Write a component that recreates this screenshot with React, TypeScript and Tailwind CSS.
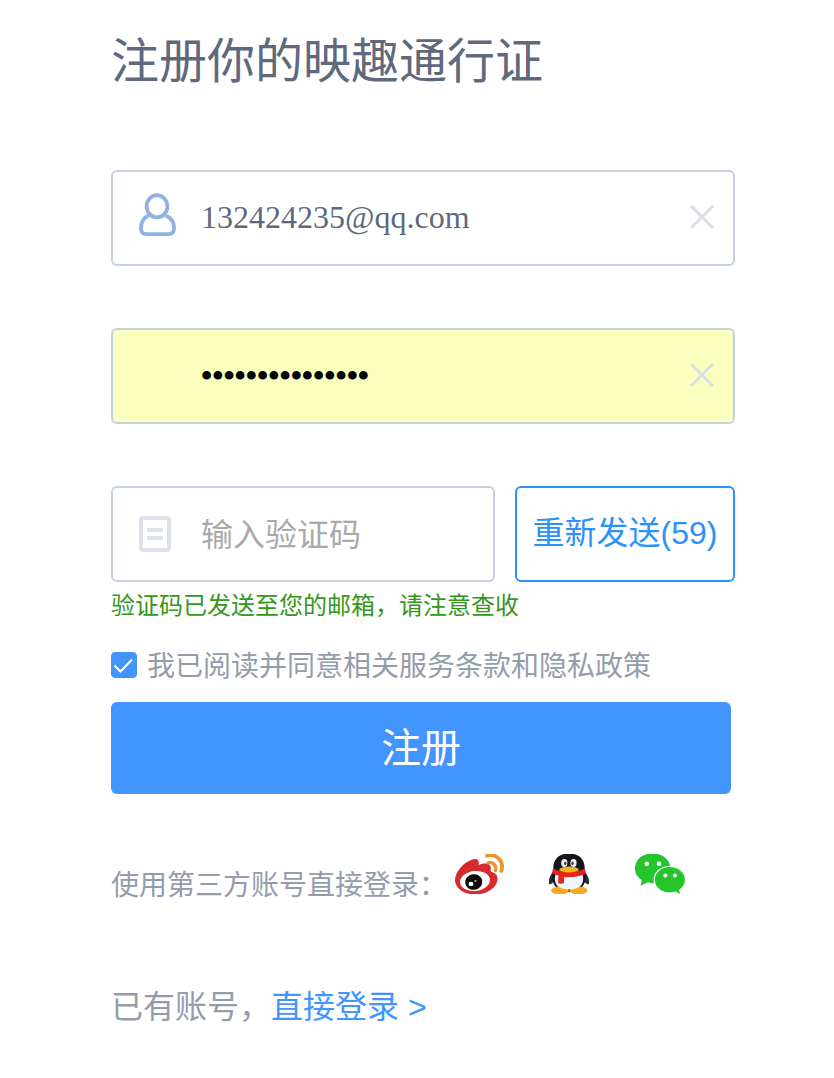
import { useState } from "react";

const fieldBox =
  "flex h-24 items-center rounded-md border-2 border-[#c5cfde]";
const fieldInput =
  "h-full min-w-0 flex-1 bg-transparent pb-0.5 font-['Liberation_Serif','Noto_Sans_CJK_SC',serif] text-[32px] outline-none";

function UserIcon() {
  return (
    <svg viewBox="0 0 40 44" className="h-11 w-10" fill="none" stroke="#8fb1e4" strokeWidth="3.8" aria-hidden="true">
      <ellipse cx="20" cy="13.300" rx="10.400" ry="11.100" />
      <path d="M11.500 22.500C6.500 24.800 4 29.500 3.900 34.800c-.1 4.200 1.800 6.300 5.600 6.300h22c3.800 0 5.700-2.100 5.600-6.300-.1-5.300-2.600-10-8.600-12.300" strokeLinejoin="round" />
    </svg>
  );
}

function NoteIcon() {
  return (
    <svg viewBox="0 0 40 44" className="h-11 w-10" fill="none" stroke="#dce1ec" strokeWidth="4" aria-hidden="true">
      <rect x="4" y="6" width="28" height="32" rx="2" />
      <path d="M10 18h16M10 26h16" />
    </svg>
  );
}

function ClearButton({ label, onClick }: { label: string; onClick: () => void }) {
  return (
    <button type="button" aria-label={label} onClick={onClick} className="mr-[19px] shrink-0 pb-0.5">
      <svg viewBox="0 0 24 24" className="size-6" fill="none" stroke="#d9dfe4" strokeWidth="3" aria-hidden="true">
        <path d="M1 1l22 22M23 1L1 23" />
      </svg>
    </button>
  );
}

function WeiboIcon() {
  return (
    <svg viewBox="0 1 50 40" className="h-10 w-[50px]" aria-hidden="true">
      <path d="M0 27C0 19 8 10 16 7c5-2 9-1 7.500 5 5-2.500 13-2.500 12.300 4-.1 1.500-.6 2.300 1 3 4 1.200 5.700 3.500 5.700 7C42.500 34.500 32 41.500 20.500 41.500 9 41.500 0 35.500 0 27z" fill="#d52a2e" />
      <ellipse cx="20" cy="28" rx="15" ry="10" fill="#fff" transform="rotate(-7 20 28)" />
      <ellipse cx="18.700" cy="29" rx="8.600" ry="7.800" fill="#0a0a0a" transform="rotate(-10 18.700 29)" />
      <ellipse cx="16" cy="31" rx="2.500" ry="2.200" fill="#fff" />
      <circle cx="20.500" cy="28" r="1.100" fill="#bbb" />
      <path d="M32 2.800C41.500 0 49.500 8.500 46.300 18" fill="none" stroke="#ea9430" strokeWidth="3.800" strokeLinecap="round" />
      <path d="M33 9.800c4.800-1.300 9 2.700 7.300 7.700" fill="none" stroke="#ea9430" strokeWidth="3.400" strokeLinecap="round" />
    </svg>
  );
}

function QQIcon() {
  return (
    <svg viewBox="1 1 42 40" className="h-10 w-[42px]" aria-hidden="true">
      <path d="M6 18C2 22 0 27 1.200 31c1.500 1 3-.5 4.500-2.500h30.600c1.500 2 3 3.500 4.500 2.500 1-4-.8-9-4.800-13z" fill="#2a2a33" />
      <path d="M5.500 18C4 7 10.500.5 21 .5S38 7 36.500 18c3 9 .5 20-15.500 21C5 38 2.500 27 5.500 18z" fill="#15151f" />
      <ellipse cx="12" cy="37.500" rx="9" ry="4" fill="#f5a820" />
      <ellipse cx="30.500" cy="37.500" rx="9" ry="4" fill="#f5a820" />
      <path d="M7.500 21c-2.500 9 1.500 15.500 13.500 15.500S37 30 34.500 21c-8 3-19 3-27 0z" fill="#f4f5f9" />
      <ellipse cx="16.300" cy="10" rx="3.100" ry="4.100" fill="#f1f1f5" />
      <ellipse cx="25.500" cy="10" rx="3.100" ry="4.100" fill="#f1f1f5" />
      <ellipse cx="17.300" cy="10.300" rx="1.200" ry="1.900" fill="#44444f" />
      <ellipse cx="24.500" cy="10.300" rx="1.200" ry="1.900" fill="#44444f" />
      <path d="M5 15.500c8 4.500 24 4.500 32 0l.8 5c-6 3.200-14 4.200-21.800 3.500v6c-1.700 1-4.300 1-6 0l.5-7.500c-2-.5-4.800-1.500-6.500-2.500z" fill="#e5231e" />
      <ellipse cx="21" cy="16.500" rx="9.800" ry="3" fill="#f2b21f" />
    </svg>
  );
}

function WechatIcon() {
  return (
    <svg viewBox="0 1 50 40" className="h-10 w-[50px]" aria-hidden="true">
      <path d="M17.500.3C7.500.3 0 6.800 0 15.500c0 5 2.500 9 6.800 11.500L5.500 32.800l7-3.300c2 .6 3.500.8 5.500.8 10 0 17.500-6.300 17.500-14.800S27.500.3 17.500.3z" fill="#25c62c" />
      <path d="M34.700 13.500c-8.700 0-15.500 5.800-15.500 13.200s6.800 13.300 15.500 13.300c2 0 3.800-.3 5.500-.9l6 2.900-1.500-4.800c3.600-2.600 5.800-6.300 5.800-10.500 0-7.400-7.100-13.200-15.800-13.200z" fill="#25c62c" stroke="#fff" strokeWidth="1.200" />
      <g fill="#fff">
        <circle cx="11.800" cy="10.700" r="2.300" />
        <circle cx="24" cy="10.700" r="2.300" />
        <circle cx="30.300" cy="22.500" r="2" />
        <circle cx="40" cy="22.500" r="2" />
      </g>
    </svg>
  );
}

export default function App() {
  const [email, setEmail] = useState("132424235@qq.com");
  const [password, setPassword] = useState("passport1234567");
  const [code, setCode] = useState("");
  const [agreed, setAgreed] = useState(true);

  return (
    <main className="bg-white pt-[30px] pr-[99px] pb-12 pl-[111px] font-['Liberation_Sans','Noto_Sans_CJK_SC',sans-serif] text-[#949cab]">
      <h1 className="text-[48px] leading-[64px] text-[#5f687c]">注册你的映趣通行证</h1>

      <form className="mt-[76px]" onSubmit={(e) => e.preventDefault()}>
        <div className="flex flex-col gap-[62px]">
          <div className={fieldBox}>
            <label htmlFor="email" aria-label="邮箱" className="mr-6 ml-6 shrink-0 pb-1.5">
              <UserIcon />
            </label>
            <input id="email" type="text" value={email} onChange={(e) => setEmail(e.target.value)} className={`${fieldInput} text-[#5f687c]`} />
            <ClearButton label="清除邮箱" onClick={() => setEmail("")} />
          </div>

          <div className={`${fieldBox} bg-[#faffbd]`}>
            <input id="password" type="password" aria-label="密码" value={password} onChange={(e) => setPassword(e.target.value)} className={`${fieldInput} pl-[88px] font-bold text-black`} />
            <ClearButton label="清除密码" onClick={() => setPassword("")} />
          </div>

          <div className="flex gap-5">
            <div className={`${fieldBox} min-w-0 flex-1`}>
              <label htmlFor="code" aria-label="验证码" className="mr-6 ml-6 shrink-0">
                <NoteIcon />
              </label>
              <input id="code" type="text" placeholder="输入验证码" value={code} onChange={(e) => setCode(e.target.value)} className="h-full min-w-0 flex-1 bg-transparent pt-0.5 font-['Liberation_Serif','Noto_Sans_CJK_SC',serif] text-[32px] text-[#5f687c] outline-none placeholder:text-[#a9a9a9]" />
            </div>
            <button type="button" className="h-24 w-[220px] shrink-0 rounded-md border-2 border-[#2b91fb] pb-0.5 text-[32px] whitespace-nowrap text-[#2b91fb]">
              重新发送(59)
            </button>
          </div>
        </div>

        <p className="mt-1 text-2xl leading-10 text-[#34961a]">验证码已发送至您的邮箱，请注意查收</p>

        <label className="mt-4 flex h-12 gap-[10px] text-[28px] leading-[50px]">
          <span className="mt-[10px] grid size-[26px] shrink-0">
            <input type="checkbox" checked={agreed} onChange={(e) => setAgreed(e.target.checked)} className="peer col-start-1 row-start-1 size-[26px] appearance-none rounded border border-[#c5cfde] checked:border-[#4294ff] checked:bg-[#4294ff]" />
            <svg viewBox="0 0 26 26" className="pointer-events-none col-start-1 row-start-1 hidden size-[26px] peer-checked:block" fill="none" stroke="#fff" strokeWidth="2" aria-hidden="true">
              <path d="M3.500 13.500l6 6L21 7.500" />
            </svg>
          </span>
          <span>我已阅读并同意相关服务条款和隐私政策</span>
        </label>

        <button type="submit" className="mt-3 flex h-[92px] w-[calc(100%-4px)] items-center justify-center rounded-md bg-[#4294ff] text-[40px] text-white">
          注册
        </button>
      </form>

      <div className="mt-[60px] flex items-start">
        <span className="mt-3 w-[344px] text-[28px] leading-10 whitespace-nowrap">使用第三方账号直接登录：</span>
        <div className="flex gap-11">
          <a href="#weibo" aria-label="微博登录"><WeiboIcon /></a>
          <a href="#qq" aria-label="QQ登录"><QQIcon /></a>
          <a href="#wechat" aria-label="微信登录"><WechatIcon /></a>
        </div>
      </div>

      <p className="mt-[77px] text-[32px] leading-[48px]">
        已有账号，<a href="#login" className="text-[#4294ff]">直接登录 &gt;</a>
      </p>
    </main>
  );
}
